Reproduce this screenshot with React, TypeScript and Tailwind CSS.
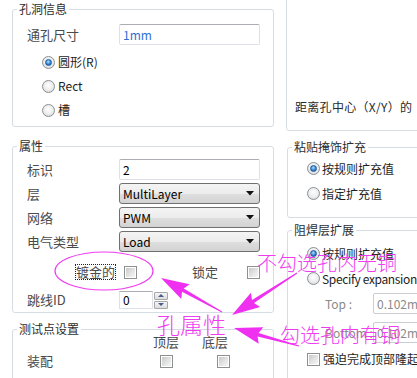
import React from "react";

const Radio = ({ checked = false }: { checked?: boolean }) => (
  <span className="flex items-center justify-center w-[13px] h-[13px] shrink-0 rounded-full border border-[#8a8f94] bg-[radial-gradient(circle_at_50%_40%,#ffffff,#ececec_55%,#cdcdcd)]">
    {checked && (
      <span className="w-[7px] h-[7px] rounded-full border border-[#1d5a9a] bg-[radial-gradient(circle_at_45%_35%,#b5e0ff,#3484d6_55%,#0d4f94)]" />
    )}
  </span>
);

const Check = () => (
  <span className="flex items-center justify-center w-[13px] h-[13px] shrink-0 border border-[#8e8f8f] bg-white">
    <span className="w-[9px] h-[9px] bg-[linear-gradient(135deg,#c9c9c9,#e6e6e6_60%,#f6f6f6)]" />
  </span>
);

const TextBox = ({ value, blue = false }: { value: string; blue?: boolean }) => (
  <div
    className={`w-[141px] h-[21px] border border-[#dde1e7] border-t-[#abadb3] rounded-[2px] bg-white flex items-center pl-[3px] text-[12px] ${
      blue ? "text-[#2f6fd6]" : "text-black"
    }`}
  >
    {value}
  </div>
);

const Select = ({ value }: { value: string }) => (
  <div className="w-[141px] h-[21px] border border-[#707070] rounded-[3px] bg-[linear-gradient(#f4f4f4,#ececec_50%,#dfdfdf_50%,#d3d3d3)] flex items-center justify-between pl-[3px] pr-[5px] text-[12px] text-black">
    <span>{value}</span>
    <svg width="8" height="5" viewBox="0 0 8 5">
      <polygon points="0,0 8,0 4,4.5" fill="#111" />
    </svg>
  </div>
);

const Group = ({
  title,
  className = "",
  children,
}: {
  title: string;
  className?: string;
  children?: React.ReactNode;
}) => (
  <div className={`relative border border-[#d5dde4] rounded-[3px] ${className}`}>
    <span className="absolute top-[-9px] left-[4px] bg-white px-[2px] text-[12px] leading-[16px] text-[#2e2e2e]">
      {title}
    </span>
    {children}
  </div>
);

const Label = ({ children, className = "" }: { children: React.ReactNode; className?: string }) => (
  <span className={`text-[13px] leading-[16px] text-[#4a4a4a] ${className}`}>{children}</span>
);

function arrowPts(tx: number, ty: number, px: number, py: number, L = 25, W = 8.5, s = 1.8, t = 0.5) {
  const dx = px - tx;
  const dy = py - ty;
  const len = Math.hypot(dx, dy);
  const ux = dx / len;
  const uy = dy / len;
  const nx = -uy;
  const ny = ux;
  const bx = px - ux * L;
  const by = py - uy * L;
  const wx = bx - ux * 3;
  const wy = by - uy * 3;
  const pts = [
    [tx + nx * t, ty + ny * t],
    [bx + nx * s, by + ny * s],
    [wx + nx * W, wy + ny * W],
    [px, py],
    [wx - nx * W, wy - ny * W],
    [bx - nx * s, by - ny * s],
    [tx - nx * t, ty - ny * t],
  ];
  return pts.map((p) => p.map((v) => v.toFixed(1)).join(",")).join(" ");
}

export default function App() {
  return (
    <div className="relative w-[417px] h-[378px] overflow-hidden bg-white flex font-['Noto_Sans_CJK_SC','Noto_Sans',sans-serif]">
      {/* Left column */}
      <div className="w-[286px] shrink-0 flex flex-col">
        <div className="ml-[12px] w-[262px] h-px bg-[#dfe5ea]" />

        {/* 孔洞信息 */}
        <Group title="孔洞信息" className="mt-[9px] ml-[12px] w-[262px] h-[118px] shrink-0">
          <div className="flex flex-col pl-[14px] pt-[14px]">
            <div className="flex items-center h-[21px]">
              <Label className="w-[92px]">通孔尺寸</Label>
              <TextBox value="1mm" blue />
            </div>
            <div className="flex flex-col mt-[5px] ml-[15px]">
              {[
                ["圆形(R)", true],
                ["Rect", false],
                ["槽", false],
              ].map(([t, c]) => (
                <div key={t as string} className="flex items-center h-[24px] gap-[2px]">
                  <Radio checked={c as boolean} />
                  <span className="text-[12px] text-[#1e1e1e] ml-[1px]">{t as string}</span>
                </div>
              ))}
            </div>
          </div>
        </Group>

        {/* 属性 */}
        <Group title="属性" className="mt-[19px] ml-[12px] w-[262px] h-[167px] shrink-0">
          <div className="flex flex-col pl-[14px] pt-[12px] gap-[3px]">
            <div className="flex items-center h-[21px]">
              <Label className="w-[92px]">标识</Label>
              <TextBox value="2" />
            </div>
            <div className="flex items-center h-[21px]">
              <Label className="w-[92px]">层</Label>
              <Select value="MultiLayer" />
            </div>
            <div className="flex items-center h-[21px]">
              <Label className="w-[92px]">网络</Label>
              <Select value="PWM" />
            </div>
            <div className="flex items-center h-[21px]">
              <Label className="w-[92px]">电气类型</Label>
              <Select value="Load" />
            </div>
            <div className="flex items-center h-[20px] mt-[7px]">
              <span className="ml-[48px] w-[41px] h-[16px] flex items-center justify-center border border-dotted border-[#222]">
                <Label>镀金的</Label>
              </span>
              <span className="ml-[8px]">
                <Check />
              </span>
              <Label className="ml-[55px]">锁定</Label>
              <span className="ml-[29px]">
                <Check />
              </span>
            </div>
            <div className="flex items-center h-[20px] mt-[5px]">
              <Label className="w-[92px]">跳线ID</Label>
              <div className="w-[34px] h-[18px] border border-[#dde1e7] border-t-[#abadb3] bg-white flex items-center pl-[3px] text-[12px] text-black">
                0
              </div>
              <div className="ml-[1px] flex flex-col gap-[1px]">
                <div className="w-[14px] h-[8px] border border-[#a7a7a7] rounded-[1px] bg-[linear-gradient(#f6f6f6,#dcdcdc)] flex items-center justify-center">
                  <svg width="6" height="3" viewBox="0 0 6 3">
                    <polygon points="0,3 6,3 3,0" fill="#4b5b8c" />
                  </svg>
                </div>
                <div className="w-[14px] h-[8px] border border-[#a7a7a7] rounded-[1px] bg-[linear-gradient(#f6f6f6,#dcdcdc)] flex items-center justify-center">
                  <svg width="6" height="3" viewBox="0 0 6 3">
                    <polygon points="0,0 6,0 3,3" fill="#4b5b8c" />
                  </svg>
                </div>
              </div>
            </div>
          </div>
        </Group>

        {/* 测试点设置 */}
        <Group title="测试点设置" className="mt-[16px] ml-[12px] w-[262px] h-[60px] shrink-0">
          <div className="flex flex-col pl-[14px] pt-[4px]">
            <div className="flex items-center h-[16px]">
              <Label className="ml-[126px]">顶层</Label>
              <Label className="ml-[23px]">底层</Label>
            </div>
            <div className="flex items-center h-[16px] mt-[3px]">
              <Label className="w-[133px]">装配</Label>
              <Check />
              <span className="ml-[44px]">
                <Check />
              </span>
            </div>
          </div>
        </Group>
      </div>

      {/* Right column */}
      <div className="flex-1 flex flex-col min-w-0">
        <div className="-mt-[12px] w-[200px] h-[143px] shrink-0 border border-[#d5dde4] rounded-bl-[3px] flex flex-col justify-end pl-[8px] pb-[15px]">
          <span className="text-[12px] leading-[16px] text-[#2a2a2a] whitespace-nowrap tracking-[0.3px]">
            距离孔中心（X/Y）的
          </span>
        </div>

        <Group title="粘贴掩饰扩充" className="mt-[16px] ml-[1px] w-[200px] h-[71px] shrink-0">
          <div className="flex flex-col pl-[19px] pt-[8px]">
            <div className="flex items-center h-[25px] gap-[2px]">
              <Radio checked />
              <span className="text-[12px] text-[#1e1e1e]">按规则扩充值</span>
            </div>
            <div className="flex items-center h-[25px] gap-[2px]">
              <Radio />
              <span className="text-[12px] text-[#1e1e1e]">指定扩充值</span>
            </div>
          </div>
        </Group>

        <Group title="阻焊层扩展" className="mt-[12px] ml-[1px] w-[200px] h-[170px] shrink-0">
          <div className="flex flex-col pt-[10px]">
            <div className="flex items-center h-[25px] gap-[2px] pl-[19px]">
              <Radio checked />
              <span className="text-[12px] text-[#1e1e1e]">按规则扩充值</span>
            </div>
            <div className="flex items-center h-[25px] gap-[2px] pl-[19px]">
              <Radio />
              <span className="text-[12px] text-[#1e1e1e] whitespace-nowrap tracking-[-0.35px]">Specify expansion</span>
            </div>
            <div className="flex items-center h-[21px] mt-[2px] pl-[37px]">
              <span className="w-[48px] text-[12px] text-[#8a8a8a]">Top :</span>
              <div className="w-[80px] h-[21px] border border-[#c9cdd3] rounded-[2px] flex items-center pl-[3px] text-[12px] text-[#8a8a8a]">
                0.102mm
              </div>
            </div>
            <div className="flex items-center h-[21px] mt-[8px] pl-[37px]">
              <span className="w-[48px] text-[12px] text-[#8a8a8a]">Bottom :</span>
              <div className="w-[80px] h-[21px] border border-[#c9cdd3] rounded-[2px] flex items-center pl-[3px] text-[12px] text-[#8a8a8a]">
                0.102mm
              </div>
            </div>
            <div className="flex items-center h-[16px] mt-[8px] pl-[19px] gap-[3px]">
              <Check />
              <span className="text-[12px] text-[#1e1e1e] whitespace-nowrap">强迫完成顶部隆起</span>
            </div>
          </div>
        </Group>
      </div>

      {/* Annotations overlay */}
      <svg className="absolute left-0 top-0 pointer-events-none" width="417" height="378" viewBox="0 0 417 378">
        <ellipse cx="104" cy="271" rx="49" ry="19" fill="none" stroke="#f03cf0" strokeWidth="1.2" />
        <polygon points={arrowPts(222, 312, 161, 278)} fill="#f030f0" />
        <polygon points={arrowPts(297, 273, 232, 315)} fill="#f030f0" />
        <polygon points={arrowPts(299, 346, 234, 328)} fill="#f030f0" />
      </svg>
      <span className="absolute left-[257px] top-[251px] text-[20px] leading-[24px] font-light text-[#f03cf0] whitespace-nowrap pointer-events-none">
        不勾选孔内无铜
      </span>
      <span className="absolute left-[157px] top-[311px] text-[23px] leading-[26px] font-light text-[#f03cf0] whitespace-nowrap pointer-events-none">
        孔属性
      </span>
      <span className="absolute left-[280px] top-[323px] text-[20px] leading-[24px] font-light text-[#f03cf0] whitespace-nowrap pointer-events-none">
        勾选孔内有铜
      </span>
    </div>
  );
}
